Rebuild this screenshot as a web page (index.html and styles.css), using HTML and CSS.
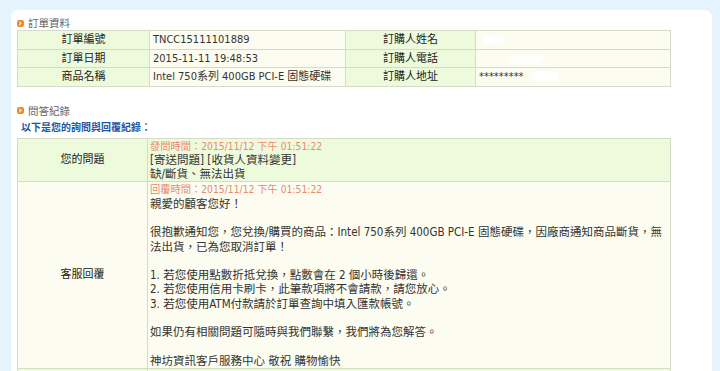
FILE: index.html
```html
<!DOCTYPE html>
<html lang="zh-Hant">
<head>
<meta charset="utf-8">
<title>訂單資料</title>
<link rel="stylesheet" href="styles.css">
</head>
<body>
<div class="card">
  <h3 class="sec-title"><span class="ico"></span>訂單資料</h3>
  <table class="info">
    <colgroup>
      <col class="c-l1"><col class="c-v1"><col class="c-l2"><col class="c-v2">
    </colgroup>
    <tr>
      <th>訂單編號</th><td>TNCC15111101889</td>
      <th>訂購人姓名</th><td><span class="redact r1"></span></td>
    </tr>
    <tr>
      <th>訂單日期</th><td>2015-11-11 19:48:53</td>
      <th>訂購人電話</th><td><span class="redact r2"></span></td>
    </tr>
    <tr>
      <th>商品名稱</th><td>Intel 750系列 400GB PCI-E 固態硬碟</td>
      <th>訂購人地址</th><td>*********<span class="redact r3"></span></td>
    </tr>
  </table>

  <h3 class="sec-title sec2"><span class="ico"></span>問答紀錄</h3>
  <p class="sub">以下是您的詢問與回覆紀錄：</p>
  <table class="qa">
    <colgroup>
      <col class="c-q"><col class="c-a">
    </colgroup>
    <tr class="ask">
      <th>您的問題</th>
      <td><span class="time">發問時間：2015/11/12 下午 01:51:22</span><br>[寄送問題] [收貨人資料變更]<br>缺/斷貨、無法出貨</td>
    </tr>
    <tr class="reply">
      <th>客服回覆</th>
      <td><span class="time">回覆時間：2015/11/12 下午 01:51:22</span><br>親愛的顧客您好！<br><br>很抱歉通知您，您兌換/購買的商品：Intel 750系列 400GB PCI-E 固態硬碟，因廠商通知商品斷貨，無<br>法出貨，已為您取消訂單！<br><br>1. 若您使用點數折抵兌換，點數會在 2 個小時後歸還。<br>2. 若您使用信用卡刷卡，此筆款項將不會請款，請您放心。<br>3. 若您使用ATM付款請於訂單查詢中填入匯款帳號。<br><br>如果仍有相關問題可隨時與我們聯繫，我們將為您解答。<br><br>神坊資訊客戶服務中心 敬祝 購物愉快</td>
    </tr>
    <tr class="ask">
      <th>&nbsp;</th>
      <td>&nbsp;</td>
    </tr>
  </table>
</div>
</body>
</html>
```

FILE: styles.css
```css
html, body {
  margin: 0;
  padding: 0;
}
body {
  background: #e5f3fc;
  font-family: "DejaVu Sans Condensed", "DejaVu Sans", "Noto Sans CJK TC", sans-serif;
  font-stretch: condensed;
  font-size: 11px;
  color: #333;
  padding: 10px 0 0 11px;
}
.card {
  width: 701px;
  background: #fff;
  border-radius: 7px 7px 0 0;
  padding: 6px 0 20px 6px;
  box-sizing: border-box;
}
.sec-title {
  margin: 0;
  font-size: 10.5px;
  font-weight: normal;
  color: #666;
  line-height: 14px;
  display: flex;
  align-items: center;
  gap: 4px;
}
.sec2 {
  margin-top: 17px;
}
.ico {
  width: 7px;
  height: 7px;
  border-radius: 2px;
  background: #f08a2c;
  position: relative;
  display: inline-block;
}
.ico::after {
  content: "";
  position: absolute;
  left: 1px;
  top: 2px;
  width: 2px;
  height: 2px;
  border-top: 1.2px solid #fff;
  border-right: 1.2px solid #fff;
  transform: rotate(45deg);
}
.sub {
  margin: 3px 0 3px 4px;
  color: #1d56a6;
  font-weight: bold;
  font-size: 10px;
  line-height: 14px;
}
table {
  width: 653px;
  border-collapse: collapse;
  table-layout: fixed;
}
th, td {
  border: 1px solid #d6dac8;
  vertical-align: middle;
}
th {
  font-weight: normal;
  text-align: center;
  color: #222;
}
.c-l1 { width: 132px; }
.c-v1 { width: 196px; }
.c-l2 { width: 130px; }
.c-v2 { width: 195px; }
.info th, .info td {
  line-height: 13.5px;
  padding: 2px 3px;
}
.info th {
  background: #eefadc;
}
.info td {
  background: #fcfdf0;
  white-space: nowrap;
  color: #333;
}
.redact {
  display: inline-block;
  background: #fff;
  height: 8px;
  border-radius: 4px;
  filter: blur(1.5px);
  vertical-align: middle;
}
.r1 { width: 22px; margin-left: 4px; }
.r2 { width: 34px; margin-left: 30px; }
.r3 { width: 26px; margin-left: 8px; height: 10px; }
.c-q { width: 130px; }
.c-a { width: 523px; }
.qa th {
  font-size: 11px;
  padding: 0 2px;
  line-height: 14.3px;
}
.qa td {
  padding: 0 2px;
  font-size: 11.5px;
  line-height: 14.3px;
  white-space: nowrap;
}
.qa .ask th, .qa .ask td {
  background: #eefadc;
}
.qa .reply th, .qa .reply td {
  background: #fcfdf0;
}
.time {
  color: #e98a70;
  font-size: 10.25px;
}
```
